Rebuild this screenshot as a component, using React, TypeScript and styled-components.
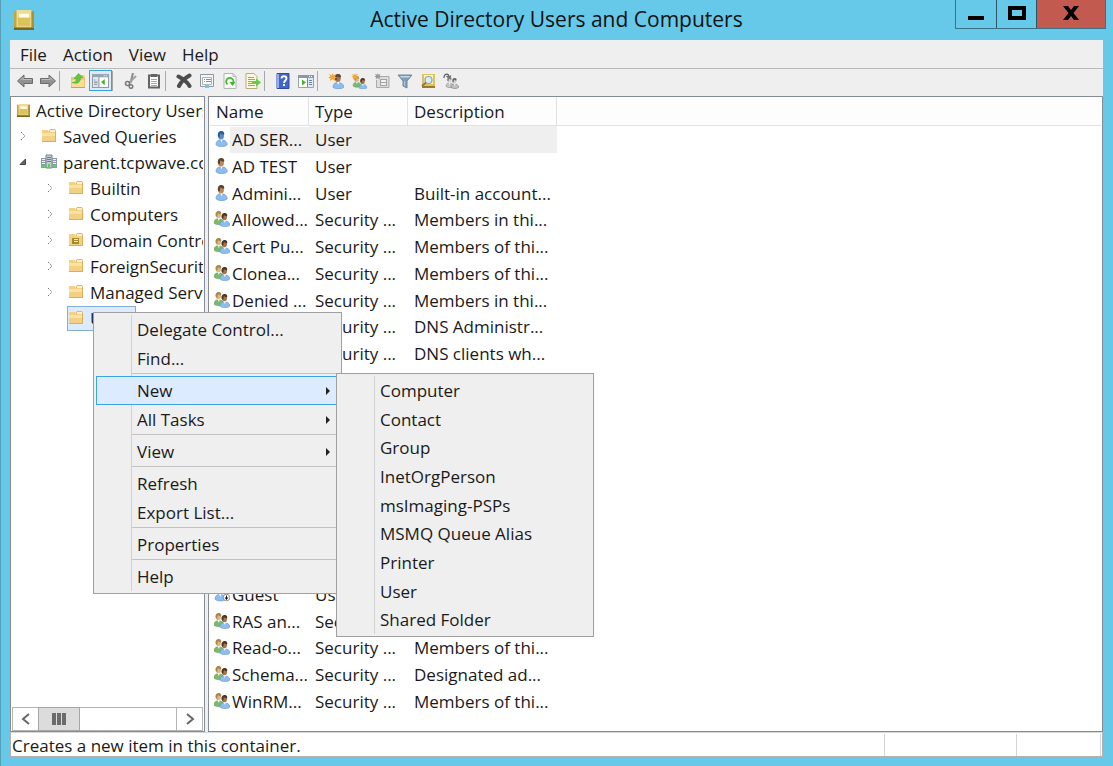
import React from "react";
import styled, { createGlobalStyle } from "styled-components";

const GlobalStyle = createGlobalStyle`
  *, *::before, *::after { box-sizing: border-box; }
  body {
    margin: 0;
    font-family: "Open Sans", "Noto Sans", sans-serif;
    font-size: 17px;
    color: #1a1a1a;
  }
  button { font: inherit; color: inherit; }
  ul { list-style: none; margin: 0; padding: 0; }
`;

const Window = styled.div`
  position: relative;
  display: flex;
  flex-direction: column;
  min-height: 100vh;
  padding: 0 10px 9px;
  background: #66c9e9;
  box-shadow: inset 1px 0 #559fb9;
`;

const TitleBar = styled.header`
  position: relative;
  display: flex;
  align-items: center;
  height: 39px;
  padding-left: 4px;
`;

const Title = styled.h1`
  flex: 1;
  margin: 0;
  padding: 0 24px 2px 0;
  font-size: 21px;
  font-weight: 400;
  line-height: 38px;
  text-align: center;
  color: #111;
`;

const Caption = styled.div`
  position: absolute;
  top: 0;
  right: -3px;
  display: flex;
  border: 1px solid #3b7386;
  border-top: 0;
`;

const CaptionButton = styled.button<{ $wide?: boolean }>`
  display: flex;
  align-items: center;
  justify-content: center;
  width: ${(p) => (p.$wide ? 69 : 40)}px;
  height: 28px;
  padding: 0 0 2px;
  border: 0;
  background: ${(p) => (p.$wide ? "#c35a50" : "transparent")};
  & + & { border-left: 1px solid #2c5666; }
`;

const Client = styled.div`
  flex: 1;
  display: flex;
  flex-direction: column;
  background: #efefef;
  border-top: 1px solid #9db4c0;
`;

const MenuBar = styled.nav`
  display: flex;
  gap: 16px;
  height: 29px;
  padding-left: 10px;
  border-bottom: 1px solid #b9b9b9;
`;

const MenuBarButton = styled.button`
  padding: 2px 0 0;
  border: 0;
  background: none;
  line-height: 26px;
`;

const ToolBar = styled.div`
  display: flex;
  align-items: center;
  height: 27px;
  padding: 0 3px 4px;
`;

const ToolButton = styled.button<{ $on?: boolean }>`
  display: flex;
  align-items: center;
  justify-content: center;
  width: 23px;
  height: 21px;
  padding: 0;
  border: 1px solid ${(p) => (p.$on ? "#3ba0e0" : "transparent")};
  background: ${(p) => (p.$on ? "#dcebfb" : "none")};
`;

const ToolSeparator = styled.span`
  width: 1px;
  height: 20px;
  margin-right: 6px;
  background: #a8a8a8;
`;

const Panes = styled.main`
  flex: 1;
  display: flex;
  gap: 3px;
`;

const TreePane = styled.section`
  display: flex;
  flex-direction: column;
  width: 195px;
  padding: 0 1px;
  border: 1px solid #858c98;
  background: #fff;
  overflow: hidden;
`;

const Tree = styled.ul`
  flex: 1;
  overflow: hidden;
`;

const TreeRow = styled.li<{ $level: number }>`
  display: flex;
  align-items: center;
  height: 26px;
  padding-left: ${(p) => [4, 4, 31][p.$level]}px;
  white-space: nowrap;
`;

const Expander = styled.span`
  display: flex;
  justify-content: center;
  flex: none;
  width: 14px;
  margin-right: 10px;
`;

const TreeLabel = styled.span<{ $selected?: boolean }>`
  display: flex;
  align-items: center;
  gap: 6px;
  height: 25px;
  border: 1px solid ${(p) => (p.$selected ? "#84acdd" : "transparent")};
  background: ${(p) => (p.$selected ? "#dcebfd" : "none")};
`;

const ScrollBar = styled.div`
  display: flex;
  height: 24px;
  border: 1px solid #b4b4b4;
`;

const ScrollButton = styled.button`
  display: flex;
  align-items: center;
  justify-content: center;
  width: 25px;
  padding: 0;
  border: 0;
  background: #fff;
`;

const ScrollThumb = styled.span`
  display: flex;
  align-items: center;
  justify-content: center;
  gap: 1px;
  width: 42px;
  margin: -1px 0;
  border: 1px solid #a6a6a6;
  background: #dcdcdc;
`;

const Grip = styled.i`
  width: 4px;
  height: 12px;
  background: #6b6b6b;
`;

const ScrollTrack = styled.span`
  flex: 1;
  border-right: 1px solid #b4b4b4;
`;

const ListPane = styled.section`
  flex: 1;
  padding: 0 1px;
  border: 1px solid #858c98;
  background: #fff;
`;

const List = styled.table`
  width: 100%;
  table-layout: fixed;
  border-collapse: separate;
  border-spacing: 0;
  text-align: left;
  white-space: nowrap;
`;

const Column = styled.col<{ $width?: number }>`
  width: ${(p) => (p.$width ? `${p.$width}px` : "auto")};
`;

const HeadCell = styled.th`
  height: 29px;
  padding: 2px 0 0 6px;
  border-right: 1px solid #e2e2e2;
  border-bottom: 1px solid #e2e2e2;
  background: #fdfdfd;
  font-weight: 400;
  line-height: 26px;
  &:last-child { border-right: 0; }
`;

const Row = styled.tr<{ $selected?: boolean }>`
  height: 27px;
  &:nth-child(4n) { height: 26px; }
  td:not(:last-child), td span { background: ${(p) => (p.$selected ? "#efefef" : "none")}; }
  td:first-child { background: none; }
`;

const Cell = styled.td`
  padding: 0 0 0 6px;
  line-height: 26px;
`;

const NameCell = styled(Cell)`
  padding-left: 4px;
`;

const NameBox = styled.div`
  display: flex;
  align-items: center;
  span { flex: 1; padding-left: 2px; }
  svg { flex: none; margin-bottom: 2px; }
`;

const StatusBar = styled.footer`
  display: flex;
  height: 25px;
  padding: 1px 1px 0;
  border: 1px solid #b3b0ae;
  border-top-color: #d8d8d8;
  background: #fff;
`;

const StatusPart = styled.span<{ $width?: number }>`
  flex: ${(p) => (p.$width ? "none" : "1")};
  width: ${(p) => (p.$width ? `${p.$width}px` : "auto")};
  border-right: 1px solid #d5d5d5;
  line-height: 24px;
`;

const Popup = styled.ul<{ $width: number }>`
  position: absolute;
  width: ${(p) => p.$width}px;
  padding: 2px;
  border: 1px solid #a0a0a0;
  background: linear-gradient(#d2d2d2, #d2d2d2) 37px 2px / 1px calc(100% - 4px) no-repeat #efefef;
`;

const ContextMenu = styled(Popup)`
  top: 312px;
  left: 93px;
`;

const SubMenu = styled(Popup)`
  top: -3px;
  left: 240px;
  z-index: 1;
`;

const PopupEntry = styled.li`
  position: relative;
  ${SubMenu} &:nth-child(3n + 2) { height: 28px; }
`;

const PopupItem = styled.button<{ $active?: boolean }>`
  display: flex;
  align-items: center;
  justify-content: space-between;
  width: 100%;
  height: 29px;
  padding: 0 8px 0 40px;
  border: 1px solid ${(p) => (p.$active ? "#3ba3df" : "transparent")};
  background: ${(p) => (p.$active ? "#dcebff" : "none")};
  line-height: 26px;
  text-align: left;
`;

const PopupSeparator = styled.li`
  height: 3px;
  margin-left: 36px;
  border-top: 1px solid #c2c2c2;
`;

type IconProps = { size?: number; children: React.ReactNode };

const Icon = ({ size = 16, children }: IconProps) => (
  <svg width={size} height={size} viewBox="0 0 16 16" aria-hidden="true">
    {children}
  </svg>
);

const ConsoleIcon = ({ size }: { size?: number }) => (
  <Icon size={size}>
    <rect x="0" y="1" width="16" height="14" fill="#c4a640" />
    <rect x="2" y="0" width="12" height="14" fill="#eedc93" />
    <path d="M3 6h10v7H3z" fill="#dcc25c" />
    <rect x="4" y="3" width="8" height="3" fill="#fffce8" />
    <path d="M0 14h16v2H0z" fill="#7d6418" />
    <path d="M14 1h2v13h-2z" fill="#b0902c" />
  </Icon>
);

const FolderIcon = () => (
  <Icon>
    <path d="M8 3l1-2h5l1 2v10H8z" fill="#e2b565" />
    <path d="M9 2h5v2H9z" fill="#fbf1d2" />
    <path d="M1 2h6l1 2h7v10H1z" fill="#f3d083" />
    <path d="M1 5h13v3H1z" fill="#fae2a4" />
    <path d="M1 13h14v1H1zM14 4h1v10h-1z" fill="#dcae5c" />
  </Icon>
);

const UnitFolderIcon = () => (
  <Icon>
    <path d="M8 3l1-2h5l1 2v10H8z" fill="#e2b565" />
    <path d="M9 2h5v2H9z" fill="#fbf1d2" />
    <path d="M1 2h6l1 2h7v10H1z" fill="#f3d083" />
    <path d="M1 13h14v1H1zM14 4h1v10h-1z" fill="#dcae5c" />
    <path d="M4 6h7v6H4z" fill="#a8892c" />
    <path d="M6 7h4v1H6zM6 9h4v1H6z" fill="#fff3bd" />
  </Icon>
);

const DomainIcon = () => (
  <Icon>
    <path d="M5 1h6v13H5z" fill="#c3ccd2" stroke="#78838b" />
    <path d="M0 4h5v10H0zM11 4h5v10h-5z" fill="#8f9ba3" />
    <path d="M1 5h3v1H1zM1 7h3v1H1zM1 9h3v1H1zM12 5h3v1h-3zM12 7h3v1h-3zM12 9h3v1h-3z" fill="#eef3f6" />
    <path d="M6 3h4v1H6zM6 5h4v1H6zM6 7h4v1H6z" fill="#6f7b84" />
    <path d="M1 11h3v2H1zM12 11h3v2h-3zM7 10h2v4H7z" fill="#52d552" />
  </Icon>
);

const person = (x: number, y: number, hair: string, skin: string, coat: string, edge: string, scale = 1) => (
  <g transform={`translate(${x} ${y}) scale(${scale})`}>
    <path d="M0 11c0-3 2-4 4-4s5 1 5 4c-2 2-7 2-9 0z" fill={coat} stroke={edge} strokeWidth="0.5" />
    <path d="M3 6h2.500l-1 3z" fill="#fff" />
    <ellipse cx="4" cy="3.500" rx="2.400" ry="3.200" fill={skin} />
    <path d="M1.500 4C1 1 3 0 4.500 0S7 1.500 6.500 3C5 3 4 2 3.500 2L3 5H2z" fill={hair} />
  </g>
);

const UserIcon = ({ blue }: { blue?: boolean }) => (
  <Icon>{person(2, 0, blue ? "#2d5f94" : "#5b4632", blue ? "#5b8cc0" : "#bd8a5c", "#8ebcec", "#5f93cb", 1.25)}</Icon>
);

const GroupIcon = () => (
  <Icon>
    {person(0, 0, "#a58a4c", "#dcb887", "#7cba6a", "#5a9950", 1.1)}
    {person(6, 2, "#4a382a", "#a8744c", "#8ebcec", "#5f93cb", 1.1)}
  </Icon>
);

const GuestIcon = () => (
  <Icon>
    {person(1, 0, "#5b4632", "#bd8a5c", "#8ebcec", "#5f93cb", 1.2)}
    <circle cx="12.500" cy="11.500" r="3.300" fill="#fff" stroke="#666" strokeWidth="0.7" />
    <path d="M12 9.500h1v2h1.500l-2 2.500-2-2.500H12z" fill="#111" />
  </Icon>
);

const star = <path d="M4 0l1 2.500L8 1 6.500 4 9 5 6.500 6 7 9 4 7 1 9l.5-3L-1 5l2.500-1L0 1l3 1.500z" fill="#f5a83a" />;

const BackIcon = () => (
  <Icon>
    <path d="M.5 8L7 2v3.500h8.500v5H7V14z" fill="#919191" stroke="#6b6b6b" />
    <path d="M3 7.500l3-3v2h8.500" fill="none" stroke="#bdbdbd" />
  </Icon>
);

const ForwardIcon = () => (
  <Icon>
    <path d="M15.500 8L9 2v3.500H.5v5H9V14z" fill="#919191" stroke="#6b6b6b" />
    <path d="M13 7.500l-3-3v2H1.500" fill="none" stroke="#bdbdbd" />
  </Icon>
);

const UpFolderIcon = () => (
  <Icon>
    <path d="M1 4h7l1-2h5l1 2v11H1z" fill="#eec878" />
    <path d="M2 7h12v7H2z" fill="#f8dc98" />
    <path d="M1 14h14v1H1z" fill="#d3a04a" />
    <path d="M2 9.500c3 0 4-1 4.500-4H4L8.500.5 13 4.500h-2.500c0 5-3 7-8.500 5z" fill="#5ccb3a" stroke="#4aa832" strokeWidth="0.5" />
  </Icon>
);

const TreeToggleIcon = () => (
  <Icon size={17}>
    <path d="M.5 2.500h15v12H.5z" fill="#fff" stroke="#8f9aa6" />
    <path d="M0 2h16v3H0z" fill="#98a4b0" />
    <path d="M11 3h1v1h-1zM13 3h1v1h-1z" fill="#fff" />
    <path d="M1 6h5v8H1z" fill="#dbe2e8" />
    <path d="M2 7h1v1H2zM2 9h3v1H2zM2 11h3v1H2zM6 5h1v9H6z" fill="#8391a0" />
    <path d="M12 6.500v6L8.500 9.500z" fill="#45b52c" />
  </Icon>
);

const ActionPaneIcon = () => (
  <Icon>
    <path d="M.5 3h15v11.500H.5z" fill="#fff" stroke="#9aa3ab" />
    <path d="M0 2h16v3H0z" fill="#8c98a4" />
    <path d="M11 3h1v1h-1zM13 3h1v1h-1z" fill="#fff" />
    <path d="M10 5h5v9h-5z" fill="#dfe9f4" />
    <path d="M11 7h3v1h-3zM11 9h3v1h-3zM11 11h3v1h-3zM9 5h1v9H9z" fill="#6b86a8" />
    <path d="M4 6.500v6l4-3z" fill="#45b52c" />
  </Icon>
);

const CutIcon = () => (
  <Icon>
    <path d="M10 0L7.500 10" stroke="#8c8c8c" strokeWidth="2" fill="none" />
    <path d="M13 3L6 10" stroke="#a2a2a2" strokeWidth="2" fill="none" />
    <circle cx="4.500" cy="10.500" r="2" fill="none" stroke="#7a7a7a" strokeWidth="1.500" />
    <circle cx="8" cy="13.500" r="1.800" fill="none" stroke="#7a7a7a" strokeWidth="1.500" />
  </Icon>
);

const PasteIcon = () => (
  <Icon>
    <path d="M3 2.500h10v12H3z" fill="#fff" stroke="#636363" strokeWidth="2" />
    <path d="M5 1h6v3H5z" fill="#636363" />
    <path d="M5 6.500h6M5 8.500h6M5 10.500h6M5 12.500h6" stroke="#a5a5a5" />
  </Icon>
);

const DeleteIcon = () => (
  <Icon>
    <path d="M2.500 3.500c4 2 9 6 11 9.500M13.500 2.500C9 5 5 9 3 13" stroke="#4c4c4c" strokeWidth="4" strokeLinecap="round" fill="none" />
  </Icon>
);

const PropertiesIcon = () => (
  <Icon>
    <path d="M1.500 1.500h13v12h-13z" fill="#f4f6f8" stroke="#8f979e" />
    <path d="M3.500 4.500h9v7h-9z" fill="#fff" stroke="#a9b4bc" />
    <path d="M5 6h1v1H5zM5 8h1v1H5zM7 6h5v1H7zM7 8h5v1H7z" fill="#7f8e9a" />
    <path d="M6 12h4v3H6z" fill="#6cc9ec" />
  </Icon>
);

const page = (
  <>
    <path d="M2 .5h9l3 3v12H2z" fill="#fbfbfb" stroke="#b4b4b4" />
    <path d="M11 .5v3h3" fill="none" stroke="#b4b4b4" />
  </>
);

const RefreshIcon = () => (
  <Icon>
    {page}
    <path d="M5.500 11.500A3.700 3.700 0 1 1 11.500 9" fill="none" stroke="#43b82f" strokeWidth="1.800" />
    <path d="M7.500 9h6l-3 4z" fill="#43b82f" />
  </Icon>
);

const ExportIcon = () => (
  <Icon>
    <path d="M1 .5h8l3 3v12H1z" fill="#fff9df" stroke="#b5ab85" />
    <path d="M3 4.500h6M3 6.500h7M3 8.500h5M3 10.500h5M3 12.500h7" stroke="#9b9b9b" />
    <path d="M7 8h4V5.500L16 9.500l-5 4V11H7z" fill="#66cc44" />
  </Icon>
);

const HelpIcon = () => (
  <Icon>
    <path d="M2 .5h12v15H2z" fill="#4066cc" stroke="#2c4ba6" />
    <path d="M2 1h2v14H2z" fill="#93aee8" />
    <path d="M6.500 5.500c0-3 5-3 5 0 0 2-2.500 2-2.500 4.500" fill="none" stroke="#fff" strokeWidth="1.800" />
    <path d="M8 11h2v2H8z" fill="#fff" />
  </Icon>
);

const NewUserIcon = () => (
  <Icon>
    {person(5, 1, "#5b4632", "#a8744c", "#8ebcec", "#5f93cb", 1.2)}
    <g transform="translate(1 0) scale(.9)">{star}</g>
  </Icon>
);

const NewGroupIcon = () => (
  <Icon>
    {person(2, 3, "#a58a4c", "#dcb887", "#7cba6a", "#5a9950", 0.9)}
    {person(8, 5, "#4a382a", "#a8744c", "#8ebcec", "#5f93cb", 0.9)}
    <g transform="translate(1 0) scale(.75)">{star}</g>
  </Icon>
);

const NewUnitIcon = () => (
  <Icon>
    <path d="M5 3.500h10v11H2.500V7" fill="#dedede" stroke="#a9a9a9" />
    <path d="M6 6h7v7H6z" fill="#a2a2a2" />
    <path d="M7 7h5v2H7zM7 10h5v2H7z" fill="#f2f2f2" />
    <g transform="translate(1 0) scale(.7)">
      <path d="M4 0l1 2.500L8 1 6.500 4 9 5 6.500 6 7 9 4 7 1 9l.5-3L-1 5l2.500-1L0 1l3 1.500z" fill="#9a9a9a" />
    </g>
  </Icon>
);

const FilterIcon = () => (
  <Icon>
    <path d="M1 2h14l-5 6v7l-4-2V8z" fill="#7f9fb8" stroke="#6c8aa3" />
    <path d="M3 3h10l-1 1.500H4z" fill="#c5d8e6" />
    <path d="M7 8h1v5H7z" fill="#b5cbdb" />
  </Icon>
);

const FindIcon = () => (
  <Icon>
    <path d="M2 1h13v13H2z" fill="#dfc45e" />
    <path d="M4 2h9v9H4z" fill="#fbf3cd" />
    <path d="M2 13h13v2H2z" fill="#9b7c20" />
    <circle cx="8.500" cy="7" r="3.500" fill="#d8eefa" stroke="#8ea2b0" strokeWidth="1.200" />
    <path d="M6 9.500L2 13" stroke="#8a7b50" strokeWidth="2" />
  </Icon>
);

const AddToGroupIcon = () => (
  <Icon>
    <path d="M1 5C1 0 6 0 6 4M6 5L3.500 3M6 5l2-2.500" fill="none" stroke="#5e5e5e" strokeWidth="1.200" />
    {person(3, 4, "#777", "#d5d5d5", "#c8c8c8", "#666", 0.85)}
    {person(8, 5, "#666", "#cfcfcf", "#c0c0c0", "#5a5a5a", 0.85)}
  </Icon>
);

const ClosedExpander = () => (
  <svg width="6" height="8" viewBox="0 0 6 8" aria-hidden="true">
    <path d="M1 0l4 4-4 4" fill="none" stroke="#777" strokeDasharray="1.500 1" />
  </svg>
);

const OpenExpander = () => (
  <svg width="8" height="8" viewBox="0 0 8 8" aria-hidden="true">
    <path d="M6.500 1v5.500H1z" fill="#666" stroke="#444" />
  </svg>
);

const Chevron = ({ left }: { left?: boolean }) => (
  <svg width="10" height="12" viewBox="0 0 10 12" aria-hidden="true">
    <path d={left ? "M8 1L2 6l6 5" : "M2 1l6 5-6 5"} fill="none" stroke="#666" strokeWidth="2" />
  </svg>
);

const SubArrow = () => (
  <svg width="4" height="8" viewBox="0 0 4 8" aria-hidden="true">
    <path d="M0 0l4 4-4 4z" fill="#222" />
  </svg>
);

const toolGroups: { label: string; icon: React.ReactNode; on?: boolean }[][] = [
  [
    { label: "Back", icon: <BackIcon /> },
    { label: "Forward", icon: <ForwardIcon /> },
  ],
  [
    { label: "Up one level", icon: <UpFolderIcon /> },
    { label: "Show or hide console tree", icon: <TreeToggleIcon />, on: true },
  ],
  [
    { label: "Cut", icon: <CutIcon /> },
    { label: "Paste", icon: <PasteIcon /> },
  ],
  [
    { label: "Delete", icon: <DeleteIcon /> },
    { label: "Properties", icon: <PropertiesIcon /> },
    { label: "Refresh", icon: <RefreshIcon /> },
    { label: "Export list", icon: <ExportIcon /> },
  ],
  [
    { label: "Help", icon: <HelpIcon /> },
    { label: "Show or hide action pane", icon: <ActionPaneIcon /> },
  ],
  [
    { label: "New user", icon: <NewUserIcon /> },
    { label: "New group", icon: <NewGroupIcon /> },
    { label: "New organizational unit", icon: <NewUnitIcon /> },
    { label: "Filter", icon: <FilterIcon /> },
    { label: "Find", icon: <FindIcon /> },
    { label: "Add to a group", icon: <AddToGroupIcon /> },
  ],
];

type TreeNode = { label: string; level: number; icon: React.ReactNode; state?: "open" | "closed"; selected?: boolean };

const treeNodes: TreeNode[] = [
  { label: "Active Directory Users and Computers", level: 0, icon: <ConsoleIcon size={13} /> },
  { label: "Saved Queries", level: 1, icon: <FolderIcon />, state: "closed" },
  { label: "parent.tcpwave.com", level: 1, icon: <DomainIcon />, state: "open" },
  { label: "Builtin", level: 2, icon: <FolderIcon />, state: "closed" },
  { label: "Computers", level: 2, icon: <FolderIcon />, state: "closed" },
  { label: "Domain Controllers", level: 2, icon: <UnitFolderIcon />, state: "closed" },
  { label: "ForeignSecurityPrincipals", level: 2, icon: <FolderIcon />, state: "closed" },
  { label: "Managed Service Accounts", level: 2, icon: <FolderIcon />, state: "closed" },
  { label: "Users", level: 2, icon: <FolderIcon />, selected: true },
];

type Kind = "current" | "user" | "group" | "guest";

const kindIcons: Record<Kind, React.ReactNode> = {
  current: <UserIcon blue />,
  user: <UserIcon />,
  group: <GroupIcon />,
  guest: <GuestIcon />,
};

const entries: [Kind, string, string, string][] = [
  ["current", "AD SER...", "User", ""],
  ["user", "AD TEST", "User", ""],
  ["user", "Admini...", "User", "Built-in account..."],
  ["group", "Allowed...", "Security ...", "Members in thi..."],
  ["group", "Cert Pu...", "Security ...", "Members of thi..."],
  ["group", "Clonea...", "Security ...", "Members of thi..."],
  ["group", "Denied ...", "Security ...", "Members in thi..."],
  ["group", "DnsAd...", "Security ...", "DNS Administr..."],
  ["group", "DnsUp...", "Security ...", "DNS clients wh..."],
  ["group", "Domai...", "Security ...", "Designated ad..."],
  ["group", "Domai...", "Security ...", "All workstatio..."],
  ["group", "Domai...", "Security ...", "All domain co..."],
  ["group", "Domai...", "Security ...", "All domain gu..."],
  ["group", "Domai...", "Security ...", "All domain us..."],
  ["group", "Enterpr...", "Security ...", "Designated ad..."],
  ["group", "Enterpr...", "Security ...", "Members of thi..."],
  ["group", "Group ...", "Security ...", "Members in thi..."],
  ["guest", "Guest", "User", "Built-in account..."],
  ["group", "RAS an...", "Security ...", "Servers in this ..."],
  ["group", "Read-o...", "Security ...", "Members of thi..."],
  ["group", "Schema...", "Security ...", "Designated ad..."],
  ["group", "WinRM...", "Security ...", "Members of thi..."],
];

const newItems = [
  "Computer",
  "Contact",
  "Group",
  "InetOrgPerson",
  "msImaging-PSPs",
  "MSMQ Queue Alias",
  "Printer",
  "User",
  "Shared Folder",
];

const menuGroups: { label: string; children?: string[]; arrow?: boolean }[][] = [
  [{ label: "Delegate Control..." }, { label: "Find..." }],
  [{ label: "New", arrow: true, children: newItems }, { label: "All Tasks", arrow: true }],
  [{ label: "View", arrow: true }],
  [{ label: "Refresh" }, { label: "Export List..." }],
  [{ label: "Properties" }],
  [{ label: "Help" }],
];

export default function App() {
  return (
    <>
      <GlobalStyle />
      <Window>
        <TitleBar>
          <ConsoleIcon size={20} />
          <Title>Active Directory Users and Computers</Title>
          <Caption>
            <CaptionButton aria-label="Minimize">
              <svg width="16" height="14" viewBox="0 0 16 14" aria-hidden="true">
                <path d="M0 10h16v4H0z" fill="#000" />
              </svg>
            </CaptionButton>
            <CaptionButton aria-label="Maximize">
              <svg width="18" height="14" viewBox="0 0 18 14" aria-hidden="true">
                <path d="M2 2h14v10H2z" fill="none" stroke="#000" strokeWidth="4" />
              </svg>
            </CaptionButton>
            <CaptionButton $wide aria-label="Close">
              <svg width="16" height="14" viewBox="0 0 16 14" aria-hidden="true">
                <path d="M0 0h5l3 4 3-4h5l-5.500 7 5.500 7h-5l-3-4-3 4H0l5.500-7z" fill="#000" />
              </svg>
            </CaptionButton>
          </Caption>
        </TitleBar>

        <Client>
          <MenuBar>
            {["File", "Action", "View", "Help"].map((label) => (
              <MenuBarButton key={label}>{label}</MenuBarButton>
            ))}
          </MenuBar>

          <ToolBar role="toolbar">
            {toolGroups.map((group, i) => (
              <React.Fragment key={i}>
                {i > 0 && <ToolSeparator />}
                {group.map((tool) => (
                  <ToolButton key={tool.label} aria-label={tool.label} $on={tool.on}>
                    {tool.icon}
                  </ToolButton>
                ))}
              </React.Fragment>
            ))}
          </ToolBar>

          <Panes>
            <TreePane>
              <Tree role="tree">
                {treeNodes.map((node) => (
                  <TreeRow key={node.label} role="treeitem" $level={node.level}>
                    {node.level > 0 && (
                      <Expander>
                        {node.state === "closed" && <ClosedExpander />}
                        {node.state === "open" && <OpenExpander />}
                      </Expander>
                    )}
                    <TreeLabel $selected={node.selected}>
                      {node.icon}
                      {node.label}
                    </TreeLabel>
                  </TreeRow>
                ))}
              </Tree>
              <ScrollBar>
                <ScrollButton aria-label="Scroll left">
                  <Chevron left />
                </ScrollButton>
                <ScrollThumb>
                  <Grip />
                  <Grip />
                  <Grip />
                </ScrollThumb>
                <ScrollTrack />
                <ScrollButton aria-label="Scroll right">
                  <Chevron />
                </ScrollButton>
              </ScrollBar>
            </TreePane>

            <ListPane>
              <List>
                <colgroup>
                  <Column $width={99} />
                  <Column $width={99} />
                  <Column $width={149} />
                  <Column />
                </colgroup>
                <thead>
                  <tr>
                    <HeadCell>Name</HeadCell>
                    <HeadCell>Type</HeadCell>
                    <HeadCell>Description</HeadCell>
                    <HeadCell />
                  </tr>
                </thead>
                <tbody>
                  {entries.map(([kind, name, type, description], i) => (
                    <Row key={i} $selected={kind === "current"}>
                      <NameCell>
                        <NameBox>
                          {kindIcons[kind]}
                          <span>{name}</span>
                        </NameBox>
                      </NameCell>
                      <Cell>{type}</Cell>
                      <Cell>{description}</Cell>
                      <Cell />
                    </Row>
                  ))}
                </tbody>
              </List>
            </ListPane>
          </Panes>

          <StatusBar>
            <StatusPart>Creates a new item in this container.</StatusPart>
            <StatusPart $width={132} />
            <StatusPart $width={84} />
          </StatusBar>
        </Client>

        <ContextMenu $width={249} role="menu">
          {menuGroups.map((group, i) => (
            <React.Fragment key={i}>
              {i > 0 && <PopupSeparator role="separator" />}
              {group.map((item) => (
                <PopupEntry key={item.label}>
                  <PopupItem role="menuitem" $active={!!item.children}>
                    {item.label}
                    {item.arrow && <SubArrow />}
                  </PopupItem>
                  {item.children && (
                    <SubMenu $width={258} role="menu">
                      {item.children.map((child) => (
                        <PopupEntry key={child}>
                          <PopupItem role="menuitem">{child}</PopupItem>
                        </PopupEntry>
                      ))}
                    </SubMenu>
                  )}
                </PopupEntry>
              ))}
            </React.Fragment>
          ))}
        </ContextMenu>
      </Window>
    </>
  );
}
